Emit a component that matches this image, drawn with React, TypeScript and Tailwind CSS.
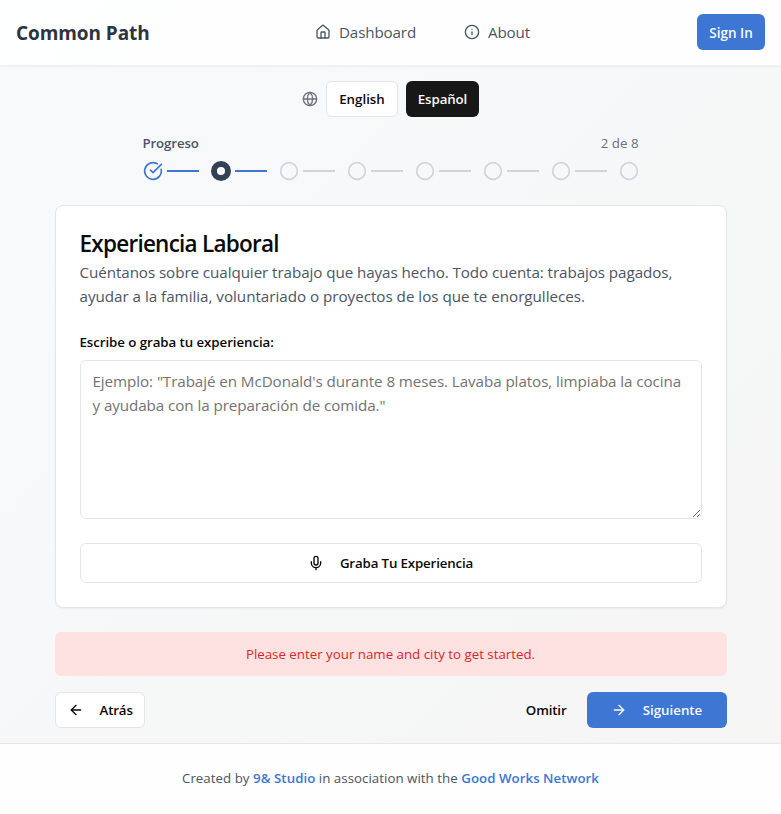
import { ArrowLeft, ArrowRight, Circle, CircleCheckBig, Globe, House, Info, Mic } from "lucide-react"

const TOTAL_STEPS = 8
const CURRENT_STEP = 2

function Header() {
  return (
    <header className="h-[66px] shrink-0 border-b border-[#e5e7eb]/60 bg-white/90 px-4 shadow-xs">
      <div className="flex h-[65px] items-center justify-between">
        <a href="#" className="w-[134px] whitespace-nowrap pt-0.5 text-[19px] font-bold tracking-[-0.08px] text-[#2d333f]">
          Common Path
        </a>
        <nav className="flex items-center gap-12 text-[15.2px] tracking-[-0.15px] text-[#4b5563]">
          <a href="#" className="flex w-[101px] items-center gap-2 whitespace-nowrap">
            <House size={16} className="shrink-0" />
            <span>Dashboard</span>
          </a>
          <a href="#" className="flex w-[68px] items-center gap-2 whitespace-nowrap">
            <Info size={16} className="shrink-0" />
            <span>About</span>
          </a>
        </nav>
        <button className="mb-px h-9 w-[68px] rounded-md bg-[#3d76d3] pt-0.5 text-[13.5px] font-semibold text-slate-50">
          Sign In
        </button>
      </div>
    </header>
  )
}

function LanguageToggle() {
  return (
    <div className="flex items-center justify-center gap-2">
      <Globe size={16} className="text-[#6b7280]" />
      <button className="h-9 w-[72px] rounded-md border border-neutral-200 bg-white pt-0.5 text-[13.3px] font-semibold text-neutral-950">
        English
      </button>
      <button className="h-9 w-[73px] rounded-md bg-neutral-900 pt-0.5 text-[13.3px] font-semibold tracking-[-0.1px] text-neutral-50">
        Español
      </button>
    </div>
  )
}

function StepIcon({ step }: { step: number }) {
  if (step < CURRENT_STEP) {
    return <CircleCheckBig size={20} className="text-[#3d76d3]" />
  }
  if (step === CURRENT_STEP) {
    return (
      <div className="flex size-5 items-center justify-center rounded-full bg-[#334155]">
        <div className="size-2 rounded-full bg-white" />
      </div>
    )
  }
  return <Circle size={20} className="text-[#d1d5db]" />
}

function Progress() {
  const steps = Array.from({ length: TOTAL_STEPS }, (_, i) => i + 1)

  return (
    <div className="mx-auto mt-4 w-[496px]">
      <div className="flex h-5 items-center justify-between pt-0.5 text-[13.3px]">
        <span className="font-semibold tracking-[-0.15px] text-[#4b5563]">Progreso</span>
        <span className="text-[#6b7280]">
          {CURRENT_STEP} de {TOTAL_STEPS}
        </span>
      </div>
      <div className="mt-2 flex items-center">
        {steps.map((step) => (
          <div key={step} className="flex items-center">
            <StepIcon step={step} />
            {step < TOTAL_STEPS && (
              <div className={`ml-1 mr-3 h-0.5 w-8 ${step <= CURRENT_STEP ? "bg-[#3d76d3]" : "bg-[#d1d5db]"}`} />
            )}
          </div>
        ))}
      </div>
    </div>
  )
}

function ExperienceCard() {
  return (
    <section className="mt-6 h-[403px] rounded-lg border border-[#e5e5e5] bg-white p-6 shadow-[0_1px_2px_0_rgba(0,0,0,0.05)]">
      <h1 className="whitespace-nowrap pt-0.5 text-[22.5px] font-semibold leading-6 tracking-[-0.75px] text-neutral-950">
        Experiencia Laboral
      </h1>
      <p className="mt-1 whitespace-nowrap text-[15.2px] leading-6 tracking-[-0.075px] text-[#4b5563]">
        Cuéntanos sobre cualquier trabajo que hayas hecho. Todo cuenta: trabajos pagados,
        <br />
        <span className="tracking-[-0.02px]">ayudar a la familia, voluntariado o proyectos de los que te enorgulleces.</span>
      </p>
      <label htmlFor="experience" className="mt-6 block text-[13.3px] font-semibold leading-5 tracking-[-0.07px] text-neutral-950">
        Escribe o graba tu experiencia:
      </label>
      <textarea
        id="experience"
        className="mt-2 block h-[159px] w-full rounded-md border border-neutral-200 bg-white px-3 py-2 text-[15.2px] leading-6 tracking-[-0.075px] placeholder:text-[#737373]"
        placeholder={`Ejemplo: "Trabajé en McDonald's durante 8 meses. Lavaba platos, limpiaba la cocina y ayudaba con la preparación de comida."`}
      />
      <button className="mt-6 flex h-10 w-full items-center justify-center gap-4 rounded-md border border-neutral-200 bg-white text-[13.3px] font-semibold tracking-[-0.15px] text-neutral-950">
        <Mic size={16} />
        <span className="pt-0.5">Graba Tu Experiencia</span>
      </button>
    </section>
  )
}

function Actions() {
  return (
    <div className="mt-4 flex items-center justify-between text-[13.3px] font-semibold">
      <button className="flex h-9 w-[90px] items-center gap-4 rounded-md border border-neutral-200 bg-white px-3 text-neutral-950">
        <ArrowLeft size={16} className="shrink-0" />
        <span className="pt-0.5 tracking-[-0.15px]">Atrás</span>
      </button>
      <div className="flex items-center gap-5">
        <button className="pt-0.5 tracking-[-0.15px] text-neutral-950">Omitir</button>
        <button className="flex h-9 w-[140px] items-center justify-center gap-4 rounded-md bg-[#3d76d3] text-slate-50">
          <ArrowRight size={16} />
          <span className="pt-0.5">Siguiente</span>
        </button>
      </div>
    </div>
  )
}

export default function App() {
  return (
    <div className="flex h-[814px] flex-col bg-linear-to-br from-slate-50 to-stone-100 font-['Open_Sans',sans-serif]">
      <Header />
      <main className="mx-auto w-[672px] flex-1 pt-[15px]">
        <LanguageToggle />
        <Progress />
        <ExperienceCard />
        <div className="mt-6 flex h-11 items-center justify-center rounded-md bg-[#fee2e2] pt-0.5 text-[13.3px] text-[#dc2626]">
          Please enter your name and city to get started.
        </div>
        <Actions />
      </main>
      <footer className="flex h-[71px] shrink-0 items-center justify-center border-t border-[#e5e7eb] bg-white/90 text-[13.3px] tracking-[0.03px] text-[#4b5563]">
        <p>
          Created by <a href="#" className="font-semibold text-[#3d76d3]">9&amp; Studio</a> in association with the{" "}
          <a href="#" className="font-semibold text-[#3d76d3]">Good Works Network</a>
        </p>
      </footer>
    </div>
  )
}
